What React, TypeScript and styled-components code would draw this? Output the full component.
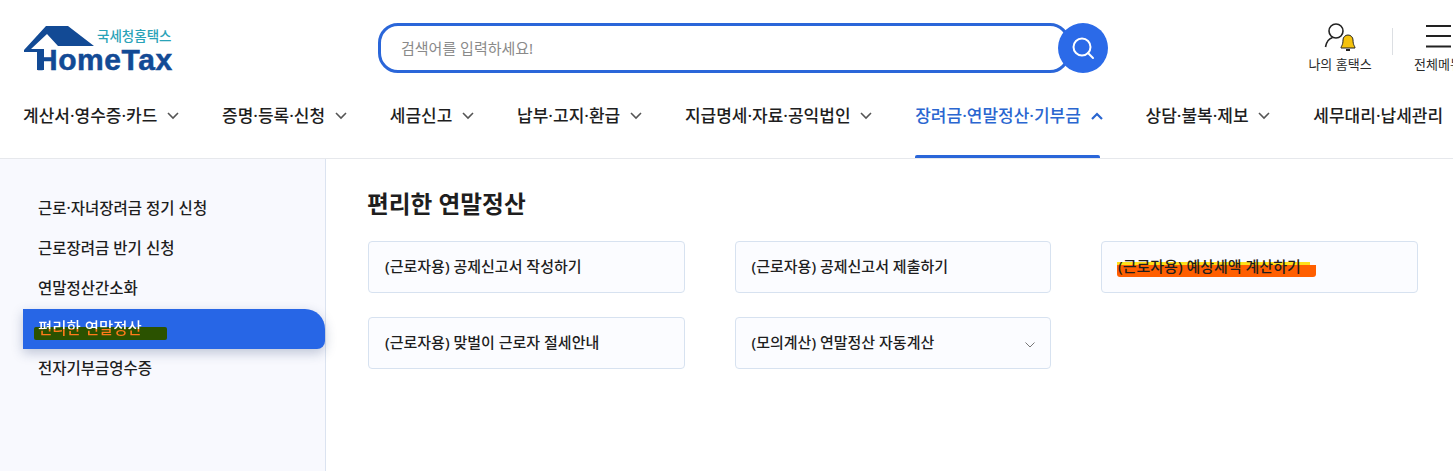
import styled, { createGlobalStyle } from 'styled-components';

const GlobalStyle = createGlobalStyle`
  html, body {
    margin: 0;
    padding: 0;
    background: #fff;
  }
  body {
    font-family: "Noto Sans", "Noto Sans CJK KR", sans-serif;
    color: #1e1e1e;
  }
`;

const Page = styled.div`
  width: 1453px;
  height: 471px;
  overflow: hidden;
  display: flex;
  flex-direction: column;
`;

const Header = styled.header`
  height: 158px;
  flex: none;
  border-bottom: 1px solid #e6e8ec;
  display: flex;
  flex-direction: column;
`;

const TopBar = styled.div`
  height: 74px;
  padding: 23px 0 0 23px;
  display: flex;
  align-items: flex-start;
`;

const Logo = styled.div`
  width: 355px;
  flex: none;
  position: relative;
  height: 50px;
`;

const LogoWord = styled.span`
  position: absolute;
  left: 13px;
  top: 19px;
  font-family: "Liberation Sans", sans-serif;
  font-size: 30px;
  line-height: 36px;
  font-weight: 700;
  letter-spacing: 0.55px;
  -webkit-text-stroke: 0.5px #124a95;
  color: #124a95;
`;

const LogoSub = styled.span`
  position: absolute;
  left: 74px;
  top: 4px;
  font-size: 13.5px;
  line-height: 18px;
  font-weight: 500;
  color: #2aa3b8;
`;

const SearchWrap = styled.div`
  display: flex;
  align-items: center;
  flex: none;
`;

const SearchBox = styled.div`
  width: 692px;
  height: 50px;
  box-sizing: border-box;
  border: 3px solid #2a66d9;
  border-radius: 20px;
  padding: 0 0 2px 20px;
  display: flex;
  align-items: center;
  font-size: 15px;
  color: #8a8a8a;
`;

const SearchButton = styled.div`
  width: 50px;
  height: 50px;
  border-radius: 50%;
  background: #2b6ae8;
  margin-left: -12px;
  display: flex;
  align-items: center;
  justify-content: center;
`;

const Utilities = styled.div`
  margin-left: 200px;
  display: flex;
  align-items: flex-start;
  flex: none;
`;

const Utility = styled.div`
  width: 64px;
  display: flex;
  flex-direction: column;
  align-items: center;
  font-size: 13px;
  line-height: 16px;
  white-space: nowrap;
  color: #2b2b2b;
`;

const UtilityIcon = styled.div`
  height: 33px;
  display: flex;
  align-items: flex-start;
`;

const Divider = styled.div`
  width: 1px;
  height: 27px;
  background: #dcdfe3;
  margin: 5px 13px 0 20px;
`;

const Nav = styled.nav`
  flex: 1;
  display: flex;
  gap: 43px;
  padding-left: 23px;
  white-space: nowrap;
`;

const NavItem = styled.div<{ $active?: boolean }>`
  position: relative;
  height: 84px;
  box-sizing: border-box;
  flex: none;
  display: flex;
  align-items: flex-start;
  gap: 9.7px;
  padding-top: 30px;
  font-size: 17px;
  line-height: 24px;
  font-weight: 500;
  color: ${({ $active }) => ($active ? '#2a66d0' : '#1e1e1e')};
  ${({ $active }) =>
    $active &&
    `
    &::after {
      content: '';
      position: absolute;
      left: 0;
      right: 3px;
      bottom: 0;
      height: 3px;
      border-radius: 2px 2px 0 0;
      background: #2a66d9;
    }
  `}
`;

const Chevron = styled.svg`
  margin-top: 8px;
`;

const Body = styled.div`
  flex: 1;
  display: flex;
`;

const Sidebar = styled.aside`
  width: 326px;
  flex: none;
  box-sizing: border-box;
  background: #f8f9fe;
  border-right: 1px solid #dbe3f0;
  padding: 30px 0 0 23px;
`;

const SideItem = styled.div<{ $active?: boolean }>`
  position: relative;
  height: 40px;
  box-sizing: border-box;
  padding: 0 0 4px 15px;
  display: flex;
  align-items: center;
  font-size: 15.5px;
  font-weight: 500;
  color: #1e1e1e;
  ${({ $active }) =>
    $active &&
    `
    background: #2766e6;
    border-radius: 0 20px 8px 0;
    box-shadow: 0 4px 12px rgba(40, 60, 110, 0.28);
  `}
`;

const SideMark = styled.span`
  position: absolute;
  left: 11px;
  top: 18px;
  width: 133px;
  height: 13px;
  border-radius: 2px;
  background: #2b5200;
`;

const SideActiveLabel = styled.span`
  position: relative;
  background: linear-gradient(#fff 0 56%, #ff7a1a 56% 100%);
  -webkit-background-clip: text;
  background-clip: text;
  color: transparent;
`;

const Main = styled.main`
  flex: 1;
  padding: 28px 0 0 41px;
`;

const Title = styled.h2`
  margin: 0 0 20px;
  font-size: 23.7px;
  line-height: 34px;
  font-weight: 700;
  color: #1e1e1e;
`;

const CardGrid = styled.div`
  display: grid;
  grid-template-columns: repeat(3, 316.5px);
  grid-auto-rows: 52px;
  column-gap: 50px;
  row-gap: 24px;
  margin-left: 1px;
`;

const Card = styled.div`
  position: relative;
  box-sizing: border-box;
  border: 1px solid #d7e2f0;
  border-radius: 4px;
  background: #fbfcff;
  padding: 0 15px 3px 16px;
  display: flex;
  align-items: center;
  justify-content: space-between;
  font-size: 15px;
  font-weight: 500;
  color: #1e1e1e;
`;

const CardLabel = styled.span`
  position: relative;
`;

const CardChevron = styled.svg`
  margin-top: 6px;
`;

const OrangeMark = styled.span`
  position: absolute;
  left: 15px;
  top: 23px;
  width: 199px;
  height: 12px;
  background: #ff5f00;
  border-radius: 0 0 3px 3px;
`;

const YellowMark = styled.span`
  position: absolute;
  left: 15px;
  top: 20px;
  width: 193px;
  height: 3px;
  background: #ffe01a;
`;

const chevronPath = 'M1 1l5 5 5-5';

function App(): JSX.Element {
  const navItems = [
    '계산서·영수증·카드',
    '증명·등록·신청',
    '세금신고',
    '납부·고지·환급',
    '지급명세·자료·공익법인',
    '장려금·연말정산·기부금',
    '상담·불복·제보',
  ];
  const sideItems = ['근로·자녀장려금 정기 신청', '근로장려금 반기 신청', '연말정산간소화'];

  return (
    <Page>
      <GlobalStyle />
      <Header>
        <TopBar>
          <Logo>
            <svg width="72" height="50" viewBox="0 0 72 50">
              <path d="M1 27 L23 3 H45 L71 23 H35 L24 11 L8 26 H21 V47 H14 V29 H1 Z" fill="#124a95" />
            </svg>
            <LogoSub>국세청홈택스</LogoSub>
            <LogoWord>HomeTax</LogoWord>
          </Logo>
          <SearchWrap>
            <SearchBox>검색어를 입력하세요!</SearchBox>
            <SearchButton>
              <svg width="26" height="26" viewBox="0 0 26 26" fill="none" stroke="#fff" strokeWidth="2">
                <circle cx="12" cy="12" r="8.5" />
                <path d="M18 18l5 5" strokeLinecap="round" />
              </svg>
            </SearchButton>
          </SearchWrap>
          <Utilities>
            <Utility>
              <UtilityIcon>
                <svg width="34" height="30" viewBox="0 0 34 30" fill="none">
                  <circle cx="13" cy="8" r="7" stroke="#222" strokeWidth="1.6" />
                  <path d="M2.500 24c1-6 4-8.500 7-9.500" stroke="#222" strokeWidth="1.6" />
                  <path d="M18 25c0-2 2-2.500 2-8a5 5 0 0 1 10 0c0 5.500 2 6 2 8z" fill="#f4c20d" stroke="#222" strokeWidth="1" />
                  <path d="M23 27h4" stroke="#222" strokeWidth="2" />
                </svg>
              </UtilityIcon>
              나의 홈택스
            </Utility>
            <Divider />
            <Utility>
              <UtilityIcon>
                <svg width="26" height="26" viewBox="0 0 26 26" stroke="#222" strokeWidth="1.8">
                  <path d="M1 3h25M1 13h25M1 23.500h25" />
                </svg>
              </UtilityIcon>
              전체메뉴
            </Utility>
          </Utilities>
        </TopBar>
        <Nav>
          {navItems.map((label, i) => (
            <NavItem key={label} $active={i === 5}>
              {label}
              <Chevron width="12" height="8" viewBox="0 0 12 8" fill="none" stroke={i === 5 ? '#2a66d0' : '#555'} strokeWidth={i === 5 ? 2.2 : 1.6}>
                <path d={i === 5 ? 'M1 7l5-5 5 5' : chevronPath} />
              </Chevron>
            </NavItem>
          ))}
          <NavItem>세무대리·납세관리</NavItem>
        </Nav>
      </Header>
      <Body>
        <Sidebar>
          {sideItems.map((label) => (
            <SideItem key={label}>{label}</SideItem>
          ))}
          <SideItem $active>
            <SideMark />
            <SideActiveLabel>편리한 연말정산</SideActiveLabel>
          </SideItem>
          <SideItem>전자기부금영수증</SideItem>
        </Sidebar>
        <Main>
          <Title>편리한 연말정산</Title>
          <CardGrid>
            <Card>(근로자용) 공제신고서 작성하기</Card>
            <Card>(근로자용) 공제신고서 제출하기</Card>
            <Card>
              <YellowMark />
              <OrangeMark />
              <CardLabel>(근로자용) 예상세액 계산하기</CardLabel>
            </Card>
            <Card>(근로자용) 맞벌이 근로자 절세안내</Card>
            <Card>
              (모의계산) 연말정산 자동계산
              <CardChevron width="10" height="6" viewBox="0 0 10 6" fill="none" stroke="#777" strokeWidth="1">
                <path d="M0.5 0.5l4.5 4.5 4.5-4.5" />
              </CardChevron>
            </Card>
          </CardGrid>
        </Main>
      </Body>
    </Page>
  );
}

export default App;
